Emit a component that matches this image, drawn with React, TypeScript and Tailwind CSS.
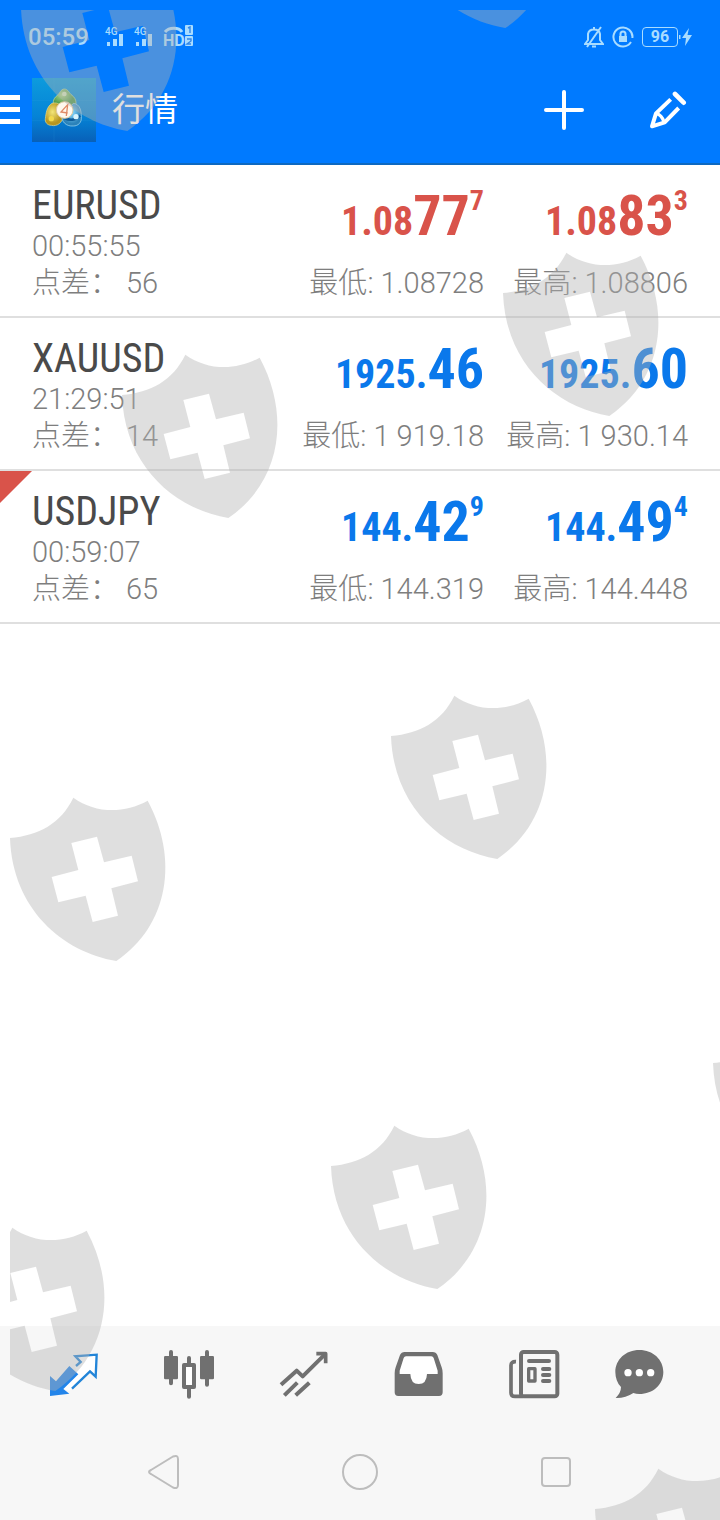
import type { ReactNode } from 'react';

type Price = { small: string; big: string; sup?: string };

type Quote = {
  symbol: string;
  time: string;
  spread: string;
  bid: Price;
  ask: Price;
  low: string;
  high: string;
  down?: boolean;
  flagged?: boolean;
};

const quotes: Quote[] = [
  {
    symbol: 'EURUSD',
    time: '00:55:55',
    spread: '56',
    bid: { small: '1.08', big: '77', sup: '7' },
    ask: { small: '1.08', big: '83', sup: '3' },
    low: '1.08728',
    high: '1.08806',
    down: true,
  },
  {
    symbol: 'XAUUSD',
    time: '21:29:51',
    spread: '14',
    bid: { small: '1925.', big: '46' },
    ask: { small: '1925.', big: '60' },
    low: '1 919.18',
    high: '1 930.14',
  },
  {
    symbol: 'USDJPY',
    time: '00:59:07',
    spread: '65',
    bid: { small: '144.', big: '42', sup: '9' },
    ask: { small: '144.', big: '49', sup: '4' },
    low: '144.319',
    high: '144.448',
    flagged: true,
  },
];

const shields = [
  'left-0 top-[-58px]',
  'left-[378px] top-[-161px]',
  'left-[482px] top-[227px]',
  'left-[101px] top-[329px]',
  'left-[370px] top-[670px]',
  'left-[-11px] top-[772px]',
  'left-[692px] top-[997px]',
  'left-[310px] top-[1100px]',
  'left-[-72px] top-[1202px]',
  'left-[574px] top-[1443px]',
];

function Shields() {
  return (
    <div className="pointer-events-none absolute top-[10px] right-0 bottom-0 left-[10px] overflow-hidden" aria-hidden="true">
      {shields.map((place) => (
        <svg key={place} viewBox="0 0 540 570" className={`absolute h-[190px] w-[180px] ${place}`}>
          <path
            fill="#b2b2b2"
            fillOpacity="0.415"
            fillRule="evenodd"
            d="M33 168C120 160 185 125 223 47C290 95 375 95 446 56C540 230 510 430 352 537C190 510 40 380 33 168ZM217 183L238 264L158 285L178 361L260 341L281 420L357 401L337 319L417 298L398 221L315 241L294 164Z"
          />
        </svg>
      ))}
    </div>
  );
}

function Signal() {
  return (
    <svg viewBox="0 0 24 24" className="h-6 w-6" fill="currentColor">
      <text x="0" y="10" fontSize="10" fontWeight="500">4G</text>
      <rect x="2" y="17" width="3" height="4" />
      <rect x="8" y="14" width="4" height="7" />
      <rect x="14" y="9" width="4" height="12" />
    </svg>
  );
}

function StatusBar() {
  return (
    <div className="flex h-14 items-center pt-[18px] pr-7 pl-7 text-[#a9dcff]">
      <span className="text-2xl font-medium">05:59</span>
      <div className="ml-4 flex items-center gap-[5px]">
        <Signal />
        <Signal />
        <svg viewBox="0 0 32 24" className="h-6 w-8" fill="currentColor">
          <text x="0" y="21" fontSize="16" fontWeight="700">HD</text>
          <path d="M2 7C6 2 16 2 19 7" fill="none" stroke="currentColor" strokeWidth="3" />
          <rect x="22" y="0" width="8" height="10" rx="1" />
          <rect x="22" y="11" width="8" height="10" rx="1" />
          <path d="M25 3l2-1v6M24 14h4v2l-4 3h4" fill="none" stroke="#3287e8" strokeWidth="1.4" />
        </svg>
      </div>
      <div className="ml-auto flex items-center gap-2">
        <svg viewBox="0 0 20 22" className="h-[22px] w-5" fill="none" stroke="currentColor" strokeWidth="2">
          <path d="M1 18H19L16 14V8C15 2 5 2 4 8V14ZM8 20.5H12M17 1L3 21M10 3V1" />
        </svg>
        <svg viewBox="0 0 22 22" className="h-[22px] w-[22px]" fill="none" stroke="currentColor" strokeWidth="2">
          <path d="M19 16A9.5 9.5 0 1 1 20.4 12" />
          <path d="M8.500 10V8A2.500 2.500 0 0 1 13.500 8V10" />
          <rect x="7" y="10" width="8" height="6" fill="currentColor" stroke="none" />
        </svg>
        <div className="flex items-center">
          <span className="flex h-5 w-9 items-center justify-center rounded-sm border border-current text-base font-bold">96</span>
          <svg viewBox="0 0 14 20" className="h-5 w-[14px]" fill="currentColor">
            <path d="M1 8h1.500v4H1ZM11 1L4 11H8L7 19L14 8H9.500Z" />
          </svg>
        </div>
      </div>
    </div>
  );
}

function AppLogo() {
  return (
    <svg viewBox="0 0 192 192" className="h-16 w-16">
      <defs>
        <linearGradient id="logo-bg" x1="0" y1="0" x2="0" y2="1">
          <stop offset="0" stopColor="#0d9bdd" />
          <stop offset="0.6" stopColor="#0583d6" />
          <stop offset="1" stopColor="#0860b8" />
        </linearGradient>
        <radialGradient id="logo-green" cx="0.4" cy="0.3">
          <stop offset="0" stopColor="#b6d98d" />
          <stop offset="1" stopColor="#4d9a4c" />
        </radialGradient>
        <radialGradient id="logo-gold" cx="0.4" cy="0.4">
          <stop offset="0" stopColor="#f3e678" />
          <stop offset="1" stopColor="#b8951f" />
        </radialGradient>
        <radialGradient id="logo-blue" cx="0.5" cy="0.4">
          <stop offset="0" stopColor="#8ddcff" />
          <stop offset="1" stopColor="#2b82ba" />
        </radialGradient>
      </defs>
      <rect width="192" height="192" fill="url(#logo-bg)" />
      <path d="M0 68H192M66 0V192M0 128H192" stroke="#57bce6" strokeOpacity="0.3" />
      <path d="M97 33C108 33 112 46 120 52C134 62 138 84 120 90H74C58 82 62 62 76 52C84 46 86 33 97 33Z" fill="url(#logo-green)" stroke="#c4dba6" strokeWidth="2" />
      <path d="M60 76C80 70 98 86 94 112C92 136 74 146 58 142C46 142 38 132 40 122C42 106 44 86 60 76Z" fill="url(#logo-gold)" stroke="#e8dc8e" strokeWidth="2" />
      <path d="M124 76C144 78 148 98 148 116C150 134 138 144 124 144C102 146 88 130 90 114Z" fill="url(#logo-blue)" stroke="#a9dff5" strokeWidth="2" />
      <path d="M98 120C112 128 130 128 144 112" stroke="#0d5b99" strokeWidth="8" fill="none" />
      <circle cx="97" cy="48" r="7" fill="#d3e6bb" />
      <circle cx="58" cy="122" r="8" fill="#f2d94c" />
      <circle cx="132" cy="116" r="8" fill="#d9f5ff" />
      <circle cx="98" cy="96" r="25" fill="#fff8ee" stroke="#dfc9a0" strokeWidth="3" />
      <path d="M103 114L107 80L87 102L107 105" fill="none" stroke="#e08a66" strokeWidth="4" />
    </svg>
  );
}

function Header() {
  return (
    <header className="border-b-2 border-[#0e69c0] bg-[#007aff]">
      <StatusBar />
      <div className="flex h-[107px] items-center pr-[33px] text-white">
        <button type="button" aria-label="菜单" className="mr-3 flex w-5 flex-col gap-[7px]">
          <span className="h-[5px] bg-current" />
          <span className="h-[5px] bg-current" />
          <span className="h-[5px] bg-current" />
        </button>
        <AppLogo />
        <h1 className="ml-4 font-[KaiTi,Roboto,'Noto_Sans_CJK_SC',sans-serif] text-[33px] leading-10 font-normal">行情</h1>
        <button type="button" aria-label="添加" className="ml-auto">
          <svg viewBox="0 0 40 40" className="h-10 w-10" stroke="currentColor" strokeWidth="4" strokeLinecap="round">
            <path d="M20 2V38M2 20H38" />
          </svg>
        </button>
        <button type="button" aria-label="编辑" className="ml-[65px]">
          <svg viewBox="387 270 114 114" className="h-[38px] w-[38px]" fill="none" stroke="currentColor" strokeWidth="12" strokeLinejoin="round" strokeLinecap="round">
            <path d="M465 279L491 305" strokeWidth="14" />
            <path d="M452 295L408 337L396 376L434 364L476 321" strokeLinecap="butt" />
            <path d="M410 338Q425 342 432 363" strokeWidth="10" />
          </svg>
        </button>
      </div>
    </header>
  );
}

function PriceCell({ price, label, value, color }: { price: Price; label: string; value: string; color: string }) {
  return (
    <div>
      <div className={`flex h-[82px] items-baseline justify-end font-['Roboto_Condensed','Liberation_Sans_Narrow',Roboto,sans-serif] font-bold ${color}`}>
        <span className="text-[40px] leading-none">{price.small}</span>
        <span className="text-[56px] leading-[66px]">{price.big}</span>
        {price.sup && <span className="self-start text-[28px] leading-9">{price.sup}</span>}
      </div>
      <div className="text-right whitespace-nowrap">
        {label}: {value}
      </div>
    </div>
  );
}

function QuoteRow({ quote }: { quote: Quote }) {
  const color = quote.down ? 'text-[#d9534a]' : 'text-[#0a78eb]';
  return (
    <li className="relative grid grid-cols-[1fr_204px_204px] border-b-2 border-[#dfdfdf] px-8 pt-[18px] pb-[14px] text-[29px] leading-[37px] font-light text-[#7e7e7e]">
      {quote.flagged && (
        <svg viewBox="0 0 32 32" className="absolute top-0 left-0 h-8 w-8" fill="#d9534a">
          <path d="M0 0H32L0 32Z" />
        </svg>
      )}
      <div>
        <h2 className="font-['Roboto_Condensed','Liberation_Sans_Narrow',Roboto,sans-serif] text-[40px] leading-[45px] font-normal text-[#4a4a4a]">
          {quote.symbol}
        </h2>
        <div>{quote.time}</div>
        <div className="flex">
          <span className="w-[94px]">点差：</span>
          <span>{quote.spread}</span>
        </div>
      </div>
      <PriceCell price={quote.bid} label="最低" value={quote.low} color={color} />
      <PriceCell price={quote.ask} label="最高" value={quote.high} color={color} />
    </li>
  );
}

function Tab({ label, viewBox, children }: { label: string; viewBox: string; children: ReactNode }) {
  return (
    <button type="button" aria-label={label} className="flex items-center justify-center">
      <svg viewBox={viewBox} className="h-[72px] w-[72px]" fill="none" stroke="currentColor" strokeLinejoin="round">
        {children}
      </svg>
    </button>
  );
}

function TabBar() {
  return (
    <nav className="grid h-24 grid-cols-6 pr-[14px] pl-[18px] text-[#707070]">
      <Tab label="行情" viewBox="117 54 216 216">
        <path d="M232 163L226 140L241 126L226 109L290 105L286 168L270 153L208 212L188 207Z" fill="#fff" stroke="none" />
        <path d="M208 138L235 163L190 207L208 221L150 228V168L168 184Z" fill="#2385ea" stroke="none" />
        <path d="M228 138L242 126L226 109L290 104L287 170L270 154L216 206" stroke="#2385d8" strokeWidth="7" strokeLinejoin="miter" />
      </Tab>
      <Tab label="图表" viewBox="462 54 216 216">
        <g strokeWidth="12" strokeLinecap="round">
          <path d="M513 96V190M621 96V194M567 114V134M567 206V230" />
        </g>
        <rect x="492" y="108" width="42" height="70" rx="4" fill="currentColor" stroke="none" />
        <rect x="600" y="108" width="42" height="70" rx="4" fill="currentColor" stroke="none" />
        <rect x="552" y="135" width="30" height="66" fill="#fff" strokeWidth="12" />
      </Tab>
      <Tab label="交易" viewBox="806 54 216 216">
        <g strokeWidth="12">
          <path d="M842 194L889 152L907 169L976 101M852 226L891 188M886 226L927 188" />
          <path d="M948 101H976V130" strokeWidth="11" />
        </g>
      </Tab>
      <Tab label="历史" viewBox="70 54 216 216">
        <path
          d="M135 96H219Q229 96 233 105L246 142Q249 150 249 160V217Q249 228 238 228H116Q105 228 105 217V160Q105 150 108 142L121 105Q125 96 135 96Z"
          fill="currentColor"
          stroke="none"
        />
        <path d="M139 109Q134 109 132 114L120 152V162H152Q153 192 177 192Q201 192 202 162H234V152L222 114Q220 109 215 109Z" fill="#fff" stroke="none" />
      </Tab>
      <Tab label="新闻" viewBox="414 54 216 216">
        <path d="M468 125Q453 124 453 136V218Q453 229 465 229H488" strokeWidth="11" />
        <rect x="483" y="96" width="109" height="133" rx="8" strokeWidth="12" />
        <path d="M507 123H567M549 147H568M549 165H568M549 183H568" strokeWidth="12" strokeLinecap="round" />
        <rect x="506" y="146" width="19" height="37" strokeWidth="10" />
      </Tab>
      <Tab label="消息" viewBox="758 54 216 216">
        <path d="M837 90C878 90 909 119 909 156C909 194 878 222 837 222Q827 222 819 219Q795 235 766 234Q782 218 782 201C771 190 765 174 765 156C765 119 796 90 837 90Z" fill="currentColor" stroke="none" />
        <g fill="#fff" stroke="none">
          <circle cx="803" cy="158" r="11" />
          <circle cx="837" cy="158" r="11" />
          <circle cx="871" cy="158" r="11" />
        </g>
      </Tab>
    </nav>
  );
}

function SystemBar() {
  return (
    <div className="grid h-[98px] grid-cols-3 items-center justify-items-center px-[66px] pt-px text-[#bdbdbd]">
      <button type="button" aria-label="返回">
        <svg viewBox="0 0 36 36" className="h-9 w-9" fill="none" stroke="currentColor" strokeWidth="2" strokeLinejoin="round">
          <path d="M27 2.500Q32 0.500 32 5V31Q32 35.500 27 33.500L5 20Q1 18 5 16Z" />
        </svg>
      </button>
      <button type="button" aria-label="主页">
        <span className="block h-9 w-9 rounded-full border-2" />
      </button>
      <button type="button" aria-label="最近任务">
        <span className="block h-[30px] w-[30px] rounded-sm border-2" />
      </button>
    </div>
  );
}

export default function App() {
  return (
    <div className="relative flex min-h-screen flex-col overflow-hidden bg-white font-[Roboto,'Noto_Sans_CJK_SC',sans-serif]">
      <Header />
      <main className="flex-1">
        <ul>
          {quotes.map((quote) => (
            <QuoteRow key={quote.symbol} quote={quote} />
          ))}
        </ul>
      </main>
      <footer className="bg-[#f7f7f7]">
        <TabBar />
        <SystemBar />
      </footer>
      <Shields />
    </div>
  );
}
